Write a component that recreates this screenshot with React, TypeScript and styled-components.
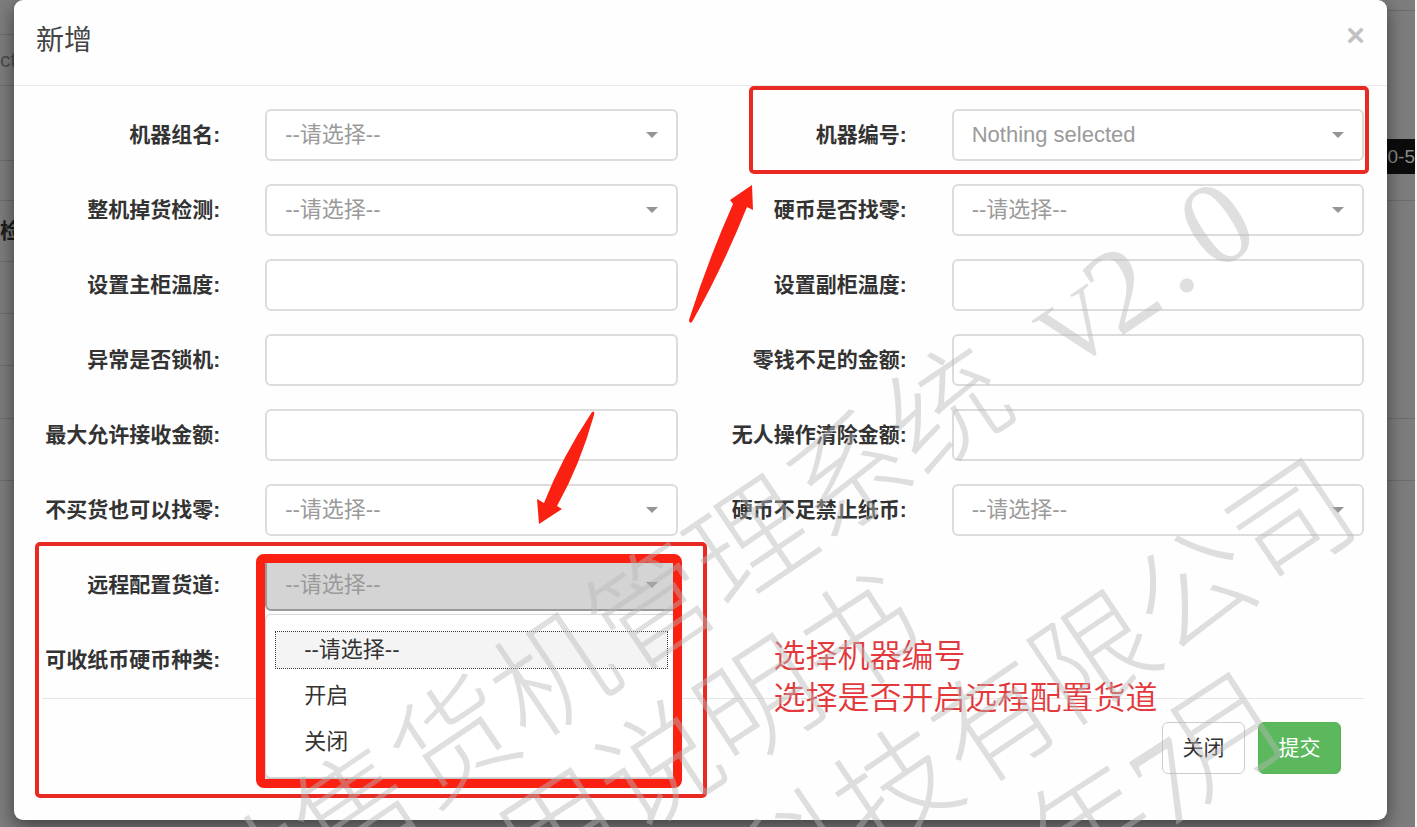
import React from "react";
import styled, { createGlobalStyle, css } from "styled-components";

const GlobalStyle = createGlobalStyle`
  *, *::before, *::after { box-sizing: border-box; }
  body {
    margin: 0;
    background: #7d7d7d;
    color: #333;
    font-family: "Liberation Sans", "Noto Sans CJK SC", sans-serif;
    font-size: 21px;
    line-height: 30px;
  }
  button, input, select { font: inherit; }
`;

const Page = styled.div`
  position: relative;
  display: flow-root;
  min-height: 100vh;
  overflow: hidden;
  border-right: 2px solid #f4f4f4;
`;

const Backdrop = styled.div`
  position: absolute;
  inset: 0;
  display: flex;
  justify-content: space-between;
`;

const Strip = styled.div`
  width: 50%;
  display: flex;
  flex-direction: column;
`;

const StripRow = styled.div<{ $height: number; $align?: "start" | "end"; $bold?: boolean }>`
  flex: none;
  height: ${(p) => p.$height}px;
  display: flex;
  align-items: center;
  justify-content: flex-${(p) => p.$align ?? "start"};
  border-bottom: 1px solid #6c6c6c;
  color: ${(p) => (p.$bold ? "#1c1c1c" : "#4c4c4c")};
  font-weight: ${(p) => (p.$bold ? 700 : 400)};
  white-space: nowrap;
`;

const Tag = styled.span`
  height: 35px;
  padding-left: 5px;
  align-self: flex-end;
  margin-bottom: 26px;
  background: #0c0c0c;
  color: #8a8a8a;
  font-size: 19px;
  line-height: 35px;
`;

const Dialog = styled.section`
  position: relative;
  margin: 0 28px 7px 14px;
  background: #fefefe;
  border-radius: 9px;
  box-shadow: 0 6px 18px rgba(0, 0, 0, 0.5);
`;

const Header = styled.header`
  display: flex;
  justify-content: space-between;
  align-items: flex-start;
  height: 86px;
  padding: 20px 22px;
  border-bottom: 1px solid #e9e9e9;
`;

const Title = styled.h1`
  margin: 0;
  font-size: 28px;
  line-height: 42px;
  font-weight: 400;
  color: #444;
`;

const CloseIcon = styled.button`
  padding: 0;
  border: 0;
  background: none;
  font-size: 32px;
  line-height: 30px;
  font-weight: 700;
  color: #c2c2c2;
`;

const Form = styled.form`
  padding-top: 23px;
`;

const Fields = styled.div`
  display: grid;
  grid-template-columns: 1fr 1fr;
  row-gap: 23px;
`;

const Field = styled.div`
  position: relative;
  display: grid;
  grid-template-columns: 1fr 2fr;
  column-gap: 45px;
  align-items: center;
  height: 52px;
  padding-right: 23px;
`;

const Label = styled.label`
  text-align: right;
  font-weight: 700;
  white-space: nowrap;
`;

const Control = styled.div`
  position: relative;
  height: 52px;
  font-size: 22px;
`;

const box = css`
  display: block;
  width: 100%;
  height: 52px;
  padding: 0 18px;
  border: 2px solid #dcdcdc;
  border-radius: 6px;
  background: #fff;
  outline: 0;
`;

const TextBox = styled.input`
  ${box}
`;

const Picker = styled.select<{ $open?: boolean }>`
  ${box}
  appearance: none;
  color: #9a9a9a;
  ${(p) =>
    p.$open &&
    css`
      background: #d4d4d4;
      border-color: #999;
    `}
`;

const Caret = styled.svg`
  position: absolute;
  right: 20px;
  top: 23px;
  width: 12px;
  height: 6px;
  fill: #959595;
  pointer-events: none;
`;

const Menu = styled.ul`
  position: absolute;
  z-index: 1;
  top: 55px;
  left: 0;
  right: 0;
  margin: 0;
  padding: 12px 10px;
  list-style: none;
  background: #fff;
  border: 1px solid #d6d6d6;
  border-radius: 6px;
  box-shadow: 0 4px 6px rgba(0, 0, 0, 0.25);
`;

const MenuItem = styled.li<{ $active?: boolean }>`
  height: 36px;
  margin: 5px 0 10px;
  padding: 0 28px;
  line-height: 36px;
  background: ${(p) => (p.$active ? "#f4f4f4" : "transparent")};
  outline: ${(p) => (p.$active ? "1px dotted #333" : "none")};
  &:last-child { margin-bottom: 5px; }
`;

const Footer = styled.footer`
  display: flex;
  justify-content: flex-end;
  gap: 13px;
  margin: 12px 23px 0 28px;
  padding: 23px 23px 46px;
  border-top: 1px solid #e6e6e6;
`;

const Button = styled.button<{ $primary?: boolean }>`
  width: 83px;
  height: 52px;
  padding: 0;
  border: 1px solid ${(p) => (p.$primary ? "#55b555" : "#ccc")};
  border-radius: 6px;
  background: ${(p) => (p.$primary ? "#5cb85c" : "#fff")};
  color: ${(p) => (p.$primary ? "#fff" : "#333")};
`;

const Frame = styled.div<{ $inset: string; $thick?: boolean }>`
  position: absolute;
  z-index: 2;
  inset: ${(p) => p.$inset};
  border: ${(p) => (p.$thick ? "9px solid #fa2012" : "4px solid #e92a22")};
  border-radius: ${(p) => (p.$thick ? 8 : 5)}px;
  pointer-events: none;
`;

const Arrow = styled.svg<{ $left: number; $top: number }>`
  position: absolute;
  z-index: 2;
  left: ${(p) => p.$left}px;
  top: ${(p) => p.$top}px;
  overflow: visible;
  fill: #fa2012;
  pointer-events: none;
`;

const NoteSlot = styled.div`
  position: relative;
`;

const Note = styled.p`
  position: absolute;
  z-index: 2;
  top: 76px;
  left: 73px;
  margin: 0;
  font-size: 32px;
  line-height: 42px;
  font-weight: 350;
  color: #e4393c;
  white-space: nowrap;
`;

const Watermark = styled.svg`
  position: absolute;
  z-index: 3;
  inset: 0;
  width: 100%;
  height: 100%;
  fill: rgba(184, 184, 184, 0.45);
  font-family: "Noto Sans CJK SC", sans-serif;
  font-size: 119px;
  font-weight: 300;
  pointer-events: none;
`;

const Latin = styled.text<{ $small?: boolean }>`
  font-family: "Liberation Serif", serif;
  font-size: ${(p) => (p.$small ? 96 : 119)}px;
`;

type FieldSpec = {
  id: string;
  label: string;
  value?: string;
  children?: React.ReactNode;
  menu?: string[];
};

const CHOOSE = "--请选择--";

function FormField({ id, label, value, menu, children }: FieldSpec) {
  return (
    <Field>
      <Label htmlFor={id}>{label}:</Label>
      <Control>
        {value ? (
          <>
            <Picker id={id} $open={!!menu}>
              {(menu ?? [value]).map((o) => (
                <option key={o}>{o}</option>
              ))}
            </Picker>
            <Caret viewBox="0 0 12 6">
              <path d="M0 0h12L6 6z" />
            </Caret>
          </>
        ) : (
          <TextBox id={id} type="text" />
        )}
        {menu && (
          <>
            <Menu role="listbox" aria-label={label}>
              {menu.map((o, i) => (
                <MenuItem key={o} role="option" aria-selected={i === 0} $active={i === 0}>
                  {o}
                </MenuItem>
              ))}
            </Menu>
            <Frame $thick $inset="-5px -4px -177px -9px" />
          </>
        )}
      </Control>
      {children}
    </Field>
  );
}

export default function App() {
  return (
    <Page>
      <GlobalStyle />
      <Backdrop aria-hidden="true">
        <Strip>
          <StripRow $height={35} />
          <StripRow $height={51}>ct</StripRow>
          <StripRow $height={75} />
          <StripRow $height={40} />
          <StripRow $height={61} $bold>检</StripRow>
          <StripRow $height={52} />
          <StripRow $height={52} />
          <StripRow $height={53} />
          <StripRow $height={62} />
        </Strip>
        <Strip>
          <StripRow $height={11} />
          <StripRow $height={190} $align="end">
            <Tag>0-5</Tag>
          </StripRow>
          <StripRow $height={218} />
          <StripRow $height={62} />
        </Strip>
      </Backdrop>

      <Dialog role="dialog" aria-labelledby="dialog-title">
        <Header>
          <Title id="dialog-title">新增</Title>
          <CloseIcon type="button" aria-label="关闭">×</CloseIcon>
        </Header>
        <Form onSubmit={(e) => e.preventDefault()}>
          <Fields>
            <FormField id="group" label="机器组名" value={CHOOSE} />
            <FormField id="machine" label="机器编号" value="Nothing selected">
              <Frame $inset="-23px 18px -13px 48px" />
              <Arrow $left={-16} $top={75} width="70" height="140" viewBox="0 0 70 140">
                <path d="M67 1 68 26 62 23Q37 85 7 138Q4 140 4 136Q23 76 48 20L45 16Z" />
              </Arrow>
            </FormField>
            <FormField id="drop" label="整机掉货检测" value={CHOOSE} />
            <FormField id="coin-change" label="硬币是否找零" value={CHOOSE} />
            <FormField id="main-temp" label="设置主柜温度" />
            <FormField id="sub-temp" label="设置副柜温度" />
            <FormField id="lock" label="异常是否锁机" />
            <FormField id="low-change" label="零钱不足的金额" />
            <FormField id="max-amount" label="最大允许接收金额" />
            <FormField id="idle-clear" label="无人操作清除金额" />
            <FormField id="free-change" label="不买货也可以找零" value={CHOOSE}>
              <Arrow $left={520} $top={-75} width="65" height="120" viewBox="0 0 65 120">
                <path d="M5 115 3 90 10 94Q28 48 58 3Q61 1 60 6Q46 56 23 97L28 100Z" />
              </Arrow>
            </FormField>
            <FormField id="no-notes" label="硬币不足禁止纸币" value={CHOOSE} />
            <FormField id="remote" label="远程配置货道" value={CHOOSE} menu={[CHOOSE, "开启", "关闭"]}>
              <Frame $inset="-17px -6px -187px 21px" />
            </FormField>
            <NoteSlot>
              <Note>
                选择机器编号
                <br />
                选择是否开启远程配置货道
              </Note>
            </NoteSlot>
            <Field>
              <Label as="span">可收纸币硬币种类:</Label>
            </Field>
          </Fields>
          <Footer>
            <Button type="button">关闭</Button>
            <Button type="submit" $primary>
              提交
            </Button>
          </Footer>
        </Form>
      </Dialog>

      <Watermark aria-hidden="true">
        <g transform="translate(256 874) rotate(-34)">
          <text x="-59" y="44">动售货机管理系统</text>
          <Latin $small x="951" y="38">V</Latin>
          <Latin x="1015 1086 1130" y="38">2.0</Latin>
        </g>
        <g transform="translate(558 831) rotate(-33)">
          <text x="-59" y="44">用说明书</text>
        </g>
        <g transform="translate(797 855) rotate(-34)">
          <text x="-59" y="44">科技有限公司</text>
        </g>
        <g transform="translate(1088 826) rotate(-33)">
          <text x="-59" y="44">年</text>
          <Latin x="61" y="47">7</Latin>
          <text x="106" y="40">月</text>
        </g>
      </Watermark>
    </Page>
  );
}
